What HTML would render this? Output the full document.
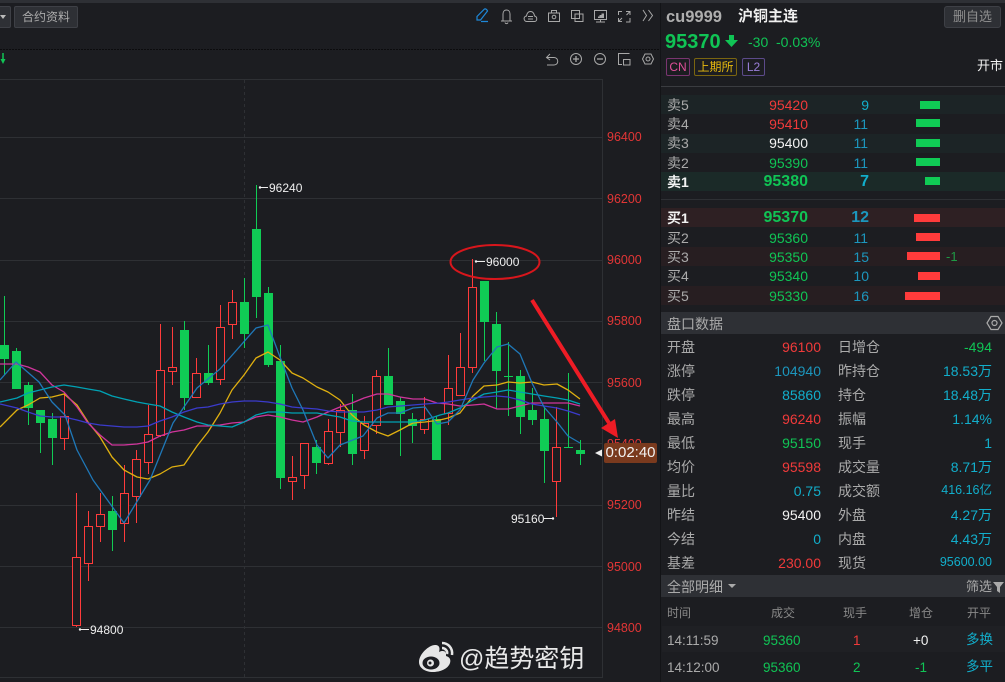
<!DOCTYPE html>
<html><head><meta charset="utf-8">
<style>
html,body{margin:0;padding:0;background:#1c1d21;}
#p{position:relative;width:1005px;height:682px;overflow:hidden;background:#1c1d21;font-family:"Liberation Sans","Noto Sans CJK SC",sans-serif;font-size:14px;color:#aaa;}
#p div{position:absolute;}
.t{line-height:20px;height:20px;white-space:nowrap;}
.r{text-align:right;width:90px;}
.ax{left:607px;color:#e23636;font-size:12.5px;}
.lb{color:#eee;font-size:12px;}
.g{color:#10c455}.d{color:#f03a3a}.w{color:#f2f2f2}.c{color:#12aecb}.v{color:#1c96bd}.l{color:#aaa}
.bo{font-weight:bold;font-size:16px}
.s{color:#888;font-size:12px}
</style></head><body><div id="p">
<div style="left:0;top:0;width:1005px;height:3px;background:#2e3035"></div>
<div style="left:-10px;top:6px;width:19px;height:20px;background:#2e3035;border:1px solid #3e4046;border-radius:2px"></div>
<div style="left:0;top:15px;width:0;height:0;border:3px solid transparent;border-top:4px solid #bbb"></div>
<div class="t" style="left:14px;top:6px;width:62px;height:20px;background:#2e3035;border:1px solid #3e4046;border-radius:2px;text-align:center;font-size:12px;color:#aaa">合约资料</div>

<svg style="position:absolute;left:0;top:0" width="660" height="682" viewBox="0 0 660 682">
<path d="M0 49.5H660" stroke="#0c0c0e" stroke-dasharray="2 1"/>
<g stroke="#2e3034" fill="none" shape-rendering="crispEdges">
<path d="M0 79.5H602.5V677.5H0M0 137.5H602M0 198.5H602M0 260.5H602M0 321.5H602M0 382.5H602M0 443.5H602M0 505.5H602M0 566.5H602M0 627.5H602"/>
<path d="M244.5 80V677" stroke-dasharray="3 3"/>
</g>
<path d="M3 53v7" stroke="#10c455" stroke-width="1.5"/><path d="M0.5 59h5L3 64z" fill="#10c455"/>

<g shape-rendering="crispEdges">
<path stroke="#10cc55" fill="none" d="M4.5 296V375M16.5 348V389M28.5 382V425M40.5 410V453M52.5 413V465M112.5 496V551M184.5 321V410M208.5 345V385M244.5 278V348M256.5 185V318M268.5 287V367M280.5 345V489M316.5 440V474M352.5 394V465M388.5 348V405M400.5 397V456M412.5 413V443M436.5 416V460M484.5 281V361M496.5 312V409M508.5 342V416M520.5 370V434M532.5 388V425M544.5 407V483M568.5 373V448M580.5 440V465M504 376.5H513M564 447.5H573"/>
<path fill="#10cc55" d="M0 345h9v14H0zM12 351h9v38h-9zM24 385h9v23h-9zM36 410h9v13h-9zM48 419h9v19h-9zM108 511h9v19h-9zM180 330h9v68h-9zM204 373h9v10h-9zM240 302h9v32h-9zM252 229h9v68h-9zM264 293h9v72h-9zM276 361h9v117h-9zM312 447h9v16h-9zM348 410h9v44h-9zM384 376h9v29h-9zM396 401h9v13h-9zM408 419h9v7h-9zM432 419h9v41h-9zM480 281h9v41h-9zM492 324h9v47h-9zM516 376h9v41h-9zM528 410h9v10h-9zM540 419h9v32h-9zM576 450h9v4h-9z"/>
<path stroke="#ff3b3b" fill="none" d="M64.5 392V450M76.5 493V627M88.5 511V581M100.5 493V542M124.5 465V542M136.5 450V523M148.5 405V474M160.5 324V437M172.5 327V385M196.5 358V397M220.5 305V385M232.5 290V339M292.5 456V500M304.5 443V489M328.5 419V465M340.5 404V447M364.5 416V459M376.5 370V434M424.5 397V434M448.5 355V425M460.5 333V395M472.5 259V373M556.5 407V517"/>
<path stroke="#ff3b3b" fill="#1c1d21" d="M60.5 416.5h8v22h-8zM72.5 557.5h8v68h-8zM84.5 526.5h8v37h-8zM96.5 514.5h8v12h-8zM120.5 493.5h8v30h-8zM132.5 459.5h8v37h-8zM144.5 434.5h8v28h-8zM156.5 370.5h8v65h-8zM168.5 367.5h8v4h-8zM192.5 373.5h8v24h-8zM216.5 327.5h8v52h-8zM228.5 302.5h8v22h-8zM288.5 477.5h8v4h-8zM300.5 443.5h8v32h-8zM324.5 431.5h8v32h-8zM336.5 410.5h8v22h-8zM360.5 423.5h8v27h-8zM372.5 376.5h8v49h-8zM420.5 419.5h8v10h-8zM444.5 388.5h8v25h-8zM456.5 367.5h8v28h-8zM468.5 287.5h8v80h-8zM552.5 447.5h8v34h-8z"/>
</g>

<g fill="none" stroke-width="1.3" stroke-linejoin="round">
<polyline stroke="#e0b010" points="0,427 17,410 28,405 40,398 52,397 64,394 77,405 88,422 100,437 112,457 124,470 137,477 148,479 160,474 172,467 184,465 197,446 208,432 220,413 232,390 244,375 256,358 268,352 280,360 292,373 303,378 317,387 328,392 340,400 352,415 364,425 377,432 388,436 400,430 413,423 425,422 440,420 448,418 460,413 473,396 484,386 497,385 508,382 520,383 532,382 544,385 557,384 568,390 580,399"/>
<polyline stroke="#d0359c" points="0,364 17,364 28,367 40,372 52,385 64,392 77,407 88,423 100,435 112,445 124,445 137,444 148,442 160,436 172,432 184,430 197,426 208,426 220,425 232,423 244,422 256,417 268,415 280,417 292,420 303,422 317,417 328,412 340,407 352,403 364,398 377,394 388,394 400,397 413,399 425,399 437,403 448,404 460,406 473,405 484,404 497,409 508,409 520,406 532,403 544,403 557,403 568,403 580,406"/>
<polyline stroke="#00a2b4" points="0,402 17,398 28,393 40,390 52,387 64,385 77,387 88,389 100,391 112,396 124,399 137,402 148,404 160,406 172,412 184,417 197,422 208,425 220,426 232,427 244,422 256,415 268,412 280,412 292,413 303,413 317,413 328,415 340,417 352,421 364,422 377,422 388,422 400,422 413,422 425,420 440,415 448,413 460,408 473,400 484,394 497,392 508,390 520,392 532,394 544,396 557,398 568,400 580,404"/>
<polyline stroke="#3b3bcc" points="0,404 17,408 28,412 40,416 52,417 64,417 77,420 88,423 100,425 112,426 124,427 137,427 148,426 160,421 172,417 184,412 197,408 208,407 220,404 232,402 244,401 256,401 268,402 280,404 292,407 303,408 317,409 328,411 340,412 352,412 364,412 377,410 388,407 400,406 413,405 425,404 440,403 448,402 460,400 473,398 484,397 497,396 508,397 520,400 532,404 544,406 557,408 568,411 580,415"/>
<polyline stroke="#1f78b8" points="0,380 16,362 39,382 52,402 65,415 77,450 93,480 124,523 150,480 173,423 197,388 220,369 256,328 268,325 280,357 292,388 303,410 317,445 328,458 340,445 363,436 377,418 388,413 400,413 413,408 425,407 437,424 448,422 460,410 473,380 484,363 497,347 508,344 520,354 532,383 544,407 557,422 568,436 580,443"/>
</g>

<path d="M259 187.5H268" stroke="#eee"/><circle cx="260" cy="187.5" r="1.2" fill="#eee"/>
<path d="M475 261.5H485" stroke="#eee"/><circle cx="476" cy="261.5" r="1.2" fill="#eee"/>
<path d="M544 518.5H554" stroke="#eee"/><circle cx="553" cy="518.5" r="1.2" fill="#eee"/>
<path d="M79 629.5H89" stroke="#eee"/><circle cx="80" cy="629.5" r="1.2" fill="#eee"/>
<ellipse cx="495" cy="262" rx="44.5" ry="17" fill="none" stroke="#d8161c" stroke-width="2"/>
<path d="M532 300L609 423" stroke="#ee1c25" stroke-width="4"/>
<path d="M595 453L602 449.500V456.500z" fill="#eee"/>
</svg>

<div class="t ax" style="top:127px">96400</div>
<div class="t ax" style="top:189px">96200</div>
<div class="t ax" style="top:250px">96000</div>
<div class="t ax" style="top:311px">95800</div>
<div class="t ax" style="top:373px">95600</div>
<div class="t ax" style="top:434px">95400</div>
<div class="t ax" style="top:495px">95200</div>
<div class="t ax" style="top:557px">95000</div>
<div class="t ax" style="top:618px">94800</div>
<div class="t" style="left:604px;top:443px;width:53px;height:20px;background:#7a3a1e;border-radius:2px;color:#f2f2f2;font-size:15px;text-align:center">0:02:40</div>
<svg style="position:absolute;left:600px;top:410px" width="25" height="33" viewBox="600 410 25 33"><path d="M618 438L601 428L615 419z" fill="#ee1c25"/></svg>

<div class="t lb" style="left:269px;top:178px">96240</div>
<div class="t lb" style="left:486px;top:252px">96000</div>
<div class="t lb" style="left:511px;top:509px">95160</div>
<div class="t lb" style="left:90px;top:620px">94800</div>

<!-- toolbar icons -->
<svg style="position:absolute;left:470px;top:4px" width="190" height="66" viewBox="0 0 190 66" fill="none" stroke="#a8a8a8" stroke-width="1">
<path d="M7 16V12.500L14.500 5C15.500 4.500 17 5.500 17.500 7L10.500 16ZM11 17.500H18" stroke="#1e88d8" stroke-width="1.200"/>
<path d="M31 17H42M33 17V10C33 7.500 34.500 6 36.500 6C38.500 6 40 7.500 40 10V17M35 18.500C35.500 20 37.500 20 38 18.500"/>
<path d="M57 17.500C53.500 17.500 53 12.500 56.500 12C57 9 58.500 7.500 60.500 7.500C62.500 7.500 64 9 64.500 12C67.500 12.500 67.500 17.500 64.500 17.500ZM58 12.500H63M58 15H63"/>
<path d="M78.500 9H89.500V17.500H78.500ZM81.500 9V6.500H86.500V9"/><circle cx="84" cy="13" r="1.800"/>
<path d="M101.500 6.500H109.500V14.500H101.500ZM105 10H113V17.500H105Z"/>
<path d="M124.500 6.500H136.500V15.500H124.500ZM130.500 15.500V17.500M126 18H135"/><path d="M128 14V12.500H129.500V11H131.500V9.500H134V14Z" fill="#a8a8a8" stroke="none"/>
<path d="M148.500 11V7.500H152M160 7.500L156.500 11M156 7.500H160V11M148.500 14V17.500H152M148.500 17.500L152 14M160 14V18H156"/>
<path d="M173 6L176.500 11.500L173 17M178.500 6L182.500 11.500L178.500 17"/>
<path d="M80 50L76.500 53.500L80 56M77 53.500H84C89 53.500 89 61 84 61H77"/>
<circle cx="106" cy="55" r="5.500"/><path d="M103 55H109M106 52V58" stroke-width="1.300"/>
<circle cx="130" cy="55" r="5.500"/><path d="M127 55H133" stroke-width="1.300"/>
<path d="M159.500 49.500H148.500V60.500H152M153.500 55.500H160V61H153.500Z"/>
<path d="M172.500 55L175 50H181L183.500 55L181 60H175Z"/><circle cx="178" cy="55" r="2"/>
</svg>

<!-- right panel -->
<div style="left:660px;top:3px;width:1px;height:679px;background:#131417"></div>
<div class="t" style="left:666px;top:7px;font-size:16.5px;font-weight:bold;color:#aeaeae">cu9999</div>
<div class="t" style="left:738px;top:7px;font-size:15px;font-weight:bold;color:#f0f0f0">沪铜主连</div>
<div class="t" style="left:944px;top:6px;width:55px;height:20px;background:#2e3035;border:1px solid #3e4046;border-radius:3px;text-align:center;font-size:13px;color:#8f8f8f">删自选</div>
<div class="t g" style="left:665px;top:32px;font-size:20px;font-weight:bold;">95370</div>
<svg style="position:absolute;left:725px;top:34px" width="14" height="14"><path d="M4 1H9V6H13L6.500 13L0 6H4Z" fill="#10c455"/></svg>
<div class="t g" style="left:748px;top:32px;font-size:14px">-30</div>
<div class="t g" style="left:776px;top:32px;font-size:14px">-0.03%</div>
<div class="t" style="left:666px;top:58px;width:22px;height:16px;line-height:16px;border:1px solid #7a3570;border-radius:2px;text-align:center;font-size:12px;color:#e0509a">CN</div>
<div class="t" style="left:694px;top:58px;width:41px;height:16px;line-height:16px;border:1px solid #7a6510;border-radius:2px;text-align:center;font-size:12px;color:#e6b90f">上期所</div>
<div class="t" style="left:742px;top:58px;width:21px;height:16px;line-height:16px;border:1px solid #5c4a8a;border-radius:2px;text-align:center;font-size:12px;color:#9a7fd8">L2</div>
<div class="t w" style="left:977px;top:56px;font-size:13px;">开市</div>
<div style="left:661px;top:86px;width:344px;height:1px;background:#3a3c40"></div>
<div style="left:661px;top:199px;width:344px;height:1px;background:#2e3034"></div>

<div style="left:661px;top:95px;width:344px;height:19px;background:#1c2426"></div>
<div style="left:661px;top:134px;width:344px;height:19px;background:#1c2426"></div>
<div style="left:661px;top:172px;width:344px;height:19px;background:#1b2a28"></div>
<div style="left:661px;top:208px;width:344px;height:19px;background:#2e2023"></div>
<div style="left:661px;top:247px;width:344px;height:19px;background:#271e21"></div>
<div style="left:661px;top:286px;width:344px;height:19px;background:#271e21"></div>

<div style="left:920px;top:101px;width:20px;height:8px;background:#10cc55"></div>
<div style="left:916px;top:119px;width:24px;height:8px;background:#10cc55"></div>
<div style="left:916px;top:139px;width:24px;height:8px;background:#10cc55"></div>
<div style="left:916px;top:158px;width:24px;height:8px;background:#10cc55"></div>
<div style="left:925px;top:177px;width:15px;height:8px;background:#10cc55"></div>
<div style="left:914px;top:214px;width:26px;height:8px;background:#ff3b3b"></div>
<div style="left:916px;top:233px;width:24px;height:8px;background:#ff3b3b"></div>
<div style="left:907px;top:252px;width:33px;height:8px;background:#ff3b3b"></div>
<div style="left:918px;top:272px;width:22px;height:8px;background:#ff3b3b"></div>
<div style="left:905px;top:292px;width:35px;height:8px;background:#ff3b3b"></div>

<div class="t l" style="left:667px;top:95px">卖5</div><div class="t r d" style="left:718px;top:95px">95420</div><div class="t r c" style="left:779px;top:95px">9</div>
<div class="t l" style="left:667px;top:114px">卖4</div><div class="t r d" style="left:718px;top:114px">95410</div><div class="t r v" style="left:778px;top:114px">11</div>
<div class="t l" style="left:667px;top:133px">卖3</div><div class="t r w" style="left:718px;top:133px">95400</div><div class="t r v" style="left:778px;top:133px">11</div>
<div class="t l" style="left:667px;top:153px">卖2</div><div class="t r g" style="left:718px;top:153px">95390</div><div class="t r v" style="left:778px;top:153px">11</div>
<div class="t w bo" style="left:667px;top:172px;font-size:14px">卖1</div><div class="t r g bo" style="left:718px;top:172px">95380</div><div class="t r c bo" style="left:779px;top:172px">7</div>
<div class="t w bo" style="left:667px;top:208px;font-size:14px">买1</div><div class="t r g bo" style="left:718px;top:208px">95370</div><div class="t r v bo" style="left:779px;top:208px">12</div>
<div class="t l" style="left:667px;top:228px">买2</div><div class="t r g" style="left:718px;top:228px">95360</div><div class="t r v" style="left:778px;top:228px">11</div>
<div class="t l" style="left:667px;top:247px">买3</div><div class="t r g" style="left:718px;top:247px">95350</div><div class="t r v" style="left:779px;top:247px">15</div>
<div class="t g" style="left:946px;top:247px;font-size:13px;color:#1f9a45">-1</div>
<div class="t l" style="left:667px;top:266px">买4</div><div class="t r g" style="left:718px;top:266px">95340</div><div class="t r v" style="left:779px;top:266px">10</div>
<div class="t l" style="left:667px;top:286px">买5</div><div class="t r g" style="left:718px;top:286px">95330</div><div class="t r v" style="left:779px;top:286px">16</div>

<div style="left:661px;top:312px;width:344px;height:22px;background:#2e3035"></div>
<div class="t l" style="left:667px;top:314px">盘口数据</div>
<svg style="position:absolute;left:986px;top:315px" width="17" height="16" fill="none" stroke="#aaa" stroke-width="1.2"><path d="M1 8L5 1.500H12L16 8L12 14.500H5Z"/><circle cx="8.500" cy="8" r="2.500"/></svg>

<div class="t l" style="left:667px;top:337px">开盘</div><div class="t r d" style="left:731px;top:337px">96100</div><div class="t l" style="left:838px;top:337px">日增仓</div><div class="t r g" style="left:902px;top:337px">-494</div>
<div class="t l" style="left:667px;top:361px">涨停</div><div class="t r c" style="left:731px;top:361px;color:#1c96bd">104940</div><div class="t l" style="left:838px;top:361px">昨持仓</div><div class="t r c" style="left:902px;top:361px">18.53万</div>
<div class="t l" style="left:667px;top:385px">跌停</div><div class="t r c" style="left:731px;top:385px">85860</div><div class="t l" style="left:838px;top:385px">持仓</div><div class="t r c" style="left:902px;top:385px">18.48万</div>
<div class="t l" style="left:667px;top:409px">最高</div><div class="t r d" style="left:731px;top:409px">96240</div><div class="t l" style="left:838px;top:409px">振幅</div><div class="t r c" style="left:902px;top:409px">1.14%</div>
<div class="t l" style="left:667px;top:433px">最低</div><div class="t r g" style="left:731px;top:433px">95150</div><div class="t l" style="left:838px;top:433px">现手</div><div class="t r c" style="left:902px;top:433px">1</div>
<div class="t l" style="left:667px;top:457px">均价</div><div class="t r d" style="left:731px;top:457px">95598</div><div class="t l" style="left:838px;top:457px">成交量</div><div class="t r c" style="left:902px;top:457px">8.71万</div>
<div class="t l" style="left:667px;top:481px">量比</div><div class="t r c" style="left:731px;top:481px">0.75</div><div class="t l" style="left:838px;top:481px">成交额</div><div class="t r c" style="left:902px;top:480px;font-size:12.5px">416.16亿</div>
<div class="t l" style="left:667px;top:505px">昨结</div><div class="t r w" style="left:731px;top:505px">95400</div><div class="t l" style="left:838px;top:505px">外盘</div><div class="t r c" style="left:902px;top:505px">4.27万</div>
<div class="t l" style="left:667px;top:529px">今结</div><div class="t r c" style="left:731px;top:529px">0</div><div class="t l" style="left:838px;top:529px">内盘</div><div class="t r c" style="left:902px;top:529px">4.43万</div>
<div class="t l" style="left:667px;top:553px">基差</div><div class="t r d" style="left:731px;top:553px">230.00</div><div class="t l" style="left:838px;top:553px">现货</div><div class="t r c" style="left:902px;top:552px;font-size:12.5px">95600.00</div>

<div style="left:661px;top:575px;width:344px;height:22px;background:#2e3035"></div>
<div class="t l" style="left:667px;top:577px">全部明细</div>
<div style="left:728px;top:584px;width:0;height:0;border:4px solid transparent;border-top:4px solid #aaa"></div>
<div class="t l" style="left:966px;top:577px;font-size:13px">筛选</div>
<svg style="position:absolute;left:993px;top:581px" width="12" height="12"><path d="M0 1H11L7 6V12L4 10V6Z" fill="#aaa"/></svg>

<div class="t s" style="left:667px;top:603px">时间</div><div class="t s" style="left:771px;top:603px">成交</div><div class="t s" style="left:843px;top:603px">现手</div><div class="t s" style="left:909px;top:603px">增仓</div><div class="t s" style="left:967px;top:603px">开平</div>
<div style="left:662px;top:626px;width:343px;height:26px;background:#1f2024"></div>
<div class="t l" style="left:667px;top:631px;font-size:13.5px">14:11:59</div><div class="t g" style="left:763px;top:631px;font-size:13.5px">95360</div><div class="t d" style="left:853px;top:631px;font-size:13.5px">1</div><div class="t w" style="left:913px;top:631px;font-size:13.5px">+0</div><div class="t c" style="left:966px;top:630px;font-size:13.5px">多换</div>
<div class="t l" style="left:667px;top:658px;font-size:13.5px">14:12:00</div><div class="t g" style="left:763px;top:658px;font-size:13.5px">95360</div><div class="t g" style="left:853px;top:658px;font-size:13.5px">2</div><div class="t g" style="left:915px;top:658px;font-size:13.5px">-1</div><div class="t c" style="left:966px;top:657px;font-size:13.5px">多平</div>

<!-- watermark -->
<svg style="position:absolute;left:416px;top:640px" width="40" height="34" viewBox="0 0 40 34">
<path d="M3 22C3 14 13 5 19 5C24 5 24 9 23 12C27 10 31 11 30 16C34 17 35 20 34 23C32 29 24 32 17 32C9 32 3 28 3 22Z" fill="#e6e6e6"/>
<ellipse cx="15" cy="23" rx="8.500" ry="6.500" fill="#1c1d21"/><circle cx="14.500" cy="23" r="3.500" fill="#e6e6e6"/><circle cx="14" cy="23" r="1.500" fill="#1c1d21"/>
<path d="M26 3C32 3 37 8 36 15M26 8C29 8 32 11 31 14" fill="none" stroke="#e6e6e6" stroke-width="2.500"/>
</svg>
<div class="t" style="left:459px;top:649px;font-size:25px;color:#e8e8e8;line-height:20px">@趋势密钥</div>
</div></body></html>
